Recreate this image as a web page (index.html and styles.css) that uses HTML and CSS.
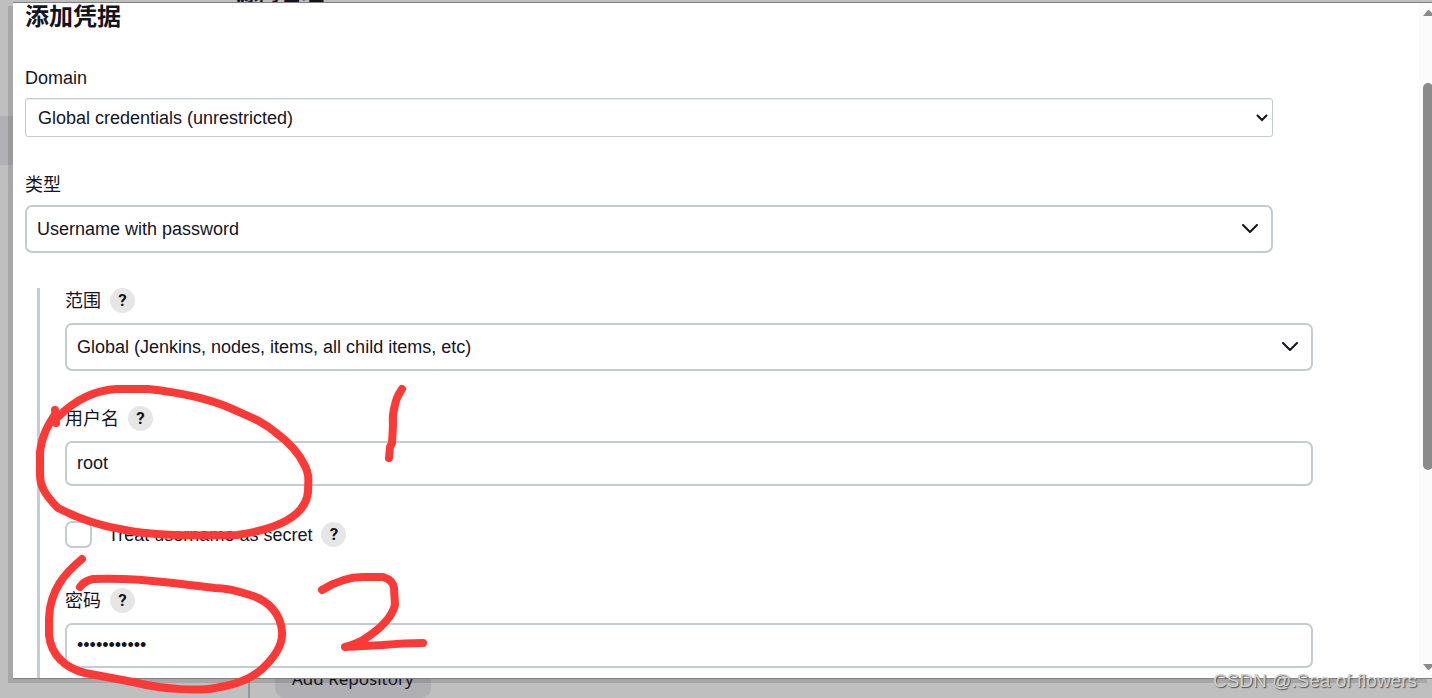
FILE: index.html
```
<!DOCTYPE html>
<html lang="zh-CN">
<head>
<meta charset="UTF-8">
<meta name="viewport" content="width=device-width, initial-scale=1.0">
<title>添加凭据</title>
<link rel="stylesheet" href="styles.css">
</head>
<body>
  <main class="page">
    <h2 class="page-title">源码管理</h2>
    <div class="side-item"></div>
    <div class="repo-row">
      <button type="button" class="repo-btn">Add Repository</button>
    </div>
  </main>

  <div class="dialog" role="dialog" aria-labelledby="dialog-title">
    <form class="dialog-body">
      <h1 id="dialog-title">添加凭据</h1>

      <div class="field">
        <div class="label-row"><label for="domain">Domain</label></div>
        <select id="domain" class="control control-plain">
          <option>Global credentials (unrestricted)</option>
        </select>
      </div>

      <div class="field">
        <div class="label-row"><label for="kind">类型</label></div>
        <select id="kind" class="control">
          <option>Username with password</option>
        </select>
      </div>

      <div class="nested">
        <div class="field">
          <div class="label-row">
            <label for="scope">范围</label>
            <button type="button" class="help">?</button>
          </div>
          <select id="scope" class="control">
            <option>Global (Jenkins, nodes, items, all child items, etc)</option>
          </select>
        </div>

        <div class="field">
          <div class="label-row">
            <label for="username">用户名</label>
            <button type="button" class="help">?</button>
          </div>
          <input type="text" id="username" class="control" value="root">
        </div>

        <div class="check-row">
          <input type="checkbox" id="secret">
          <label for="secret">Treat username as secret</label>
          <button type="button" class="help">?</button>
        </div>

        <div class="field">
          <div class="label-row">
            <label for="password">密码</label>
            <button type="button" class="help">?</button>
          </div>
          <input type="password" id="password" class="control" value="12345678901">
        </div>
      </div>
    </form>

    <div class="scrollbar" aria-hidden="true">
      <svg width="12" height="6" viewBox="0 0 12 6"><path d="M0 6 5 0h1l6 6z"/></svg>
      <div class="track-above"></div>
      <div class="thumb"></div>
      <div class="track-below"></div>
      <svg width="12" height="6" viewBox="0 0 12 6"><path d="M0 0h12L6 6H5z"/></svg>
    </div>
  </div>

  <!-- 手写标注 -->
  <svg class="marks" width="450" height="698" viewBox="0 0 450 698" aria-hidden="true">
    <path d="M56 423 55 410M58 417C75 400 95 390 117 389H148C175 392 205 397 230 408 250 417 262 421 275 432 290 443 300 455 305 466 310 476 308 482 308 492 306 512 285 528 237 535 180 536 150 535 125 530 100 526 75 517 58 508 44 494 40 485 40 475V452C42 435 48 425 56 413"/>
    <path d="M402 389Q396 398 395 405 392 415 393 425L392 443 390 447 389 458"/>
    <path d="M82 559C65 573 50 590 49 618V635C51 655 65 668 85 673L133 682C165 690 200 691 215 688 235 685 250 680 262 669 275 657 283 645 282 632 281 615 270 601 250 595 235 590 225 588 215 588L173 583C140 579 115 578 93 579Q84 581 80 587"/>
    <path d="M322 590C338 580 350 577 363 577H383Q393 580 394 588L395 605C392 617 382 628 363 640Q353 645 345 647L383 645C405 643 412 643 423 643"/>
  </svg>

  <div class="watermark">CSDN @.Sea of flowers</div>
</body>
</html>
```
FILE: styles.css
```
:root {
  --text-color: #14141f;
  --border-color: #c3ccd1;
  --mark-color: #fb3a38;
  --font: "Liberation Sans", "Noto Sans CJK SC", sans-serif;
}

* {
  box-sizing: border-box;
}

body {
  margin: 0;
  height: 100vh;
  position: relative;
  overflow: hidden;
  background: #bfbfbf;
  color: var(--text-color);
  font-family: var(--font);
  font-size: 18px;
  line-height: 20px;
}

/* 背景页面 */
.page {
  height: 100%;
  display: flex;
  flex-direction: column;
}

.page-title {
  margin: -22px 0 0 236px;
  font-size: 22px;
  line-height: 30px;
}

.side-item {
  width: 13px;
  height: 49px;
  margin-top: 108px;
  background: #b0b0b6;
}

.repo-row {
  margin: auto 0 0 248px;
  padding-left: 25px;
  border-left: 2px solid #92999d;
}

.repo-btn {
  padding: 8px 17px;
  border: none;
  border-radius: 10px;
  background: #b0b0b4;
  color: var(--text-color);
  font-family: "Noto Sans", sans-serif;
  font-size: 17px;
  line-height: 22px;
}

/* 弹窗 */
.dialog {
  position: absolute;
  inset: 2px 0 19px 13px;
  display: flex;
  background: #fff;
  border-top: 1px solid #808080;
  border-bottom: 1px solid #808080;
  box-shadow: -5px 4px 0 rgba(0, 0, 0, 0.12);
}

.dialog-body {
  flex: 1;
  overflow: hidden;
  padding: 0 146px 0 12px;
}

h1 {
  margin: 0 0 36px;
  font-size: 24px;
  line-height: 28px;
}

.field {
  margin-bottom: 35px;
}

.field:has(.control-plain) {
  margin-bottom: 37px;
}

.label-row {
  display: flex;
  align-items: center;
  gap: 9px;
  min-height: 21px;
  margin-bottom: 10px;
}

.control {
  display: block;
  width: 100%;
  height: 45px;
  padding: 0 10px;
  border: 2px solid var(--border-color);
  border-radius: 7px;
  background: #fff;
  color: var(--text-color);
  font: inherit;
}

select.control {
  height: 48px;
  appearance: none;
  background: #fff url("data:image/svg+xml,%3Csvg xmlns='http://www.w3.org/2000/svg' width='16' height='10' viewBox='0 0 16 10' fill='none' stroke='%2314141f' stroke-width='2' stroke-linecap='round' stroke-linejoin='round'%3E%3Cpath d='M1 1l7 7 7-7'/%3E%3C/svg%3E") no-repeat right 13px center;
}

select.control-plain {
  height: 39px;
  padding: 0 12px;
  border-width: 1px;
  border-radius: 3px;
  box-shadow: inset 0 1px 1px rgba(0, 0, 0, 0.08);
  background-image: url("data:image/svg+xml,%3Csvg xmlns='http://www.w3.org/2000/svg' width='12' height='8' viewBox='0 0 12 8' fill='none' stroke='%2314141f' stroke-width='2'%3E%3Cpath d='M1 1l5 5 5-5'/%3E%3C/svg%3E");
  background-position: right 4px center;
}

.nested {
  margin: 0 -40px 0 12px;
  padding: 0 0 60px 25px;
  border-left: 3px solid var(--border-color);
}

.help {
  width: 25px;
  height: 25px;
  padding: 0;
  border: none;
  border-radius: 50%;
  background: #e6e6e6;
  color: #14141f;
  font: bold 17px/25px Roboto, sans-serif;
}

.check-row {
  display: flex;
  align-items: center;
  margin-bottom: 40px;
}

.check-row input {
  appearance: none;
  width: 27px;
  height: 27px;
  margin: 0 16px 0 0;
  border: 2px solid var(--border-color);
  border-radius: 7px;
}

.check-row .help {
  margin-left: 9px;
}

.scrollbar {
  width: 13px;
  display: flex;
  flex-direction: column;
  overflow: hidden;
  padding: 7px 0 8px 4px;
  background: #fbfbfb;
}

.scrollbar svg {
  flex: none;
  fill: #8b8b8b;
}

.track-above {
  flex: 67;
}

.thumb {
  flex: 387;
  width: 10px;
  border-radius: 5px;
  background: #8b8b8b;
}

.track-below {
  flex: 194;
}

.marks {
  position: absolute;
  top: 0;
  left: 0;
  fill: none;
  stroke: var(--mark-color);
  stroke-width: 8;
  stroke-linecap: round;
  stroke-linejoin: round;
  pointer-events: none;
}

.watermark {
  position: absolute;
  right: 15px;
  bottom: 5px;
  color: #d0d0d0;
  font-size: 19px;
  line-height: 24px;
  text-shadow: 1px 1px 1px #555;
}
```
